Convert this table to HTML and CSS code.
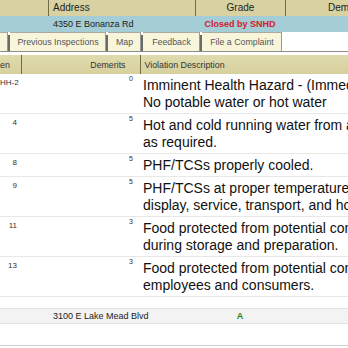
FILE: index.html
```html
<!DOCTYPE html>
<html>
<head>
<meta charset="utf-8">
<link rel="stylesheet" href="styles.css">
</head>
<body>
<div class="page">
  <div class="grid hdr">
    <div class="c c0"></div>
    <div class="c c1">Address</div>
    <div class="c c2">Grade</div>
    <div class="c c3">Demerits</div>
  </div>
  <div class="grid bar">
    <div class="c c0"></div>
    <div class="c c1">4350 E Bonanza Rd</div>
    <div class="c c2 closed">Closed by SNHD</div>
    <div class="c c3"></div>
  </div>
  <div class="detail">
    <div class="tabs">
      <div class="tab stub"></div>
      <div class="tab tab-prev">Previous Inspections</div>
      <div class="tab tab-map">Map</div>
      <div class="tab tab-feed">Feedback</div>
      <div class="tab tab-file">File a Complaint</div>
    </div>
    <table class="viol">
      <thead>
        <tr><th class="code">en</th><th class="dem">Demerits</th><th class="desc">Violation Description</th></tr>
      </thead>
      <tbody>
        <tr><td class="code">HH-2</td><td class="dem">0</td><td class="desc"><span class="ln">Imminent Health Hazard - (Immediate Closure)</span><span class="ln">No potable water or hot water</span></td></tr>
        <tr><td class="code">4</td><td class="dem">5</td><td class="desc"><span class="ln">Hot and cold running water from approved source</span><span class="ln">as required.</span></td></tr>
        <tr><td class="code">8</td><td class="dem">5</td><td class="desc"><span class="ln">PHF/TCSs properly cooled.</span></td></tr>
        <tr><td class="code">9</td><td class="dem">5</td><td class="desc"><span class="ln">PHF/TCSs at proper temperatures during storage,</span><span class="ln">display, service, transport, and holding.</span></td></tr>
        <tr><td class="code">11</td><td class="dem">3</td><td class="desc"><span class="ln">Food protected from potential contamination</span><span class="ln">during storage and preparation.</span></td></tr>
        <tr><td class="code">13</td><td class="dem">3</td><td class="desc"><span class="ln">Food protected from potential contamination by</span><span class="ln">employees and consumers.</span></td></tr>
      </tbody>
    </table>
  </div>
  <div class="grid foot">
    <div class="c c0"></div>
    <div class="c c1">3100 E Lake Mead Blvd</div>
    <div class="c c2 grade">A</div>
    <div class="c c3"></div>
  </div>
  <div class="after"></div>
</div>
</body>
</html>
```
FILE: styles.css
```css
* { box-sizing: border-box; }
html, body { margin: 0; padding: 0; background: #fff; }
body {
  width: 348px;
  height: 348px;
  overflow: hidden;
  font-family: "Liberation Sans", Arial, sans-serif;
  color: #111;
}
.page { width: 440px; }
.grid {
  display: grid;
  grid-template-columns: 48px 147px 90px 125px;
}
.c { white-space: nowrap; overflow: hidden; }
.hdr {
  height: 16px;
  background: #d8d2a2;
  font-size: 10px;
  line-height: 16px;
  color: #222;
}
.hdr .c + .c { border-left: 1px solid #726c45; }
.hdr .c1 { padding-left: 4px; }
.hdr .c2, .hdr .c3 { text-align: center; }
.bar {
  height: 16px;
  background: #a4cdd6;
  font-size: 9px;
  line-height: 16px;
  color: #1a1a1a;
}
.bar .c1 { padding-left: 5px; }
.closed { color: #d3202b; font-weight: bold; text-align: center; }

.tabs {
  display: flex;
  height: 20px;
  border-bottom: 1px solid #8d8d8d;
  margin-bottom: 3px;
}
.tab {
  position: relative;
  flex: none;
  height: 19px;
  background: #f8f5da;
  border-top: 1px solid #a9a9a0;
  border-right: 1px solid #9a9a94;
  border-left: 2px solid #6a6a66;
  padding: 0 1px 0 2px;
  font-size: 8.8px;
  line-height: 18px;
  color: #555;
  text-align: center;
  white-space: nowrap;
}
.tab::before {
  content: "";
  position: absolute;
  left: -2px;
  top: -1px;
  width: 2px;
  height: 3px;
  background: #fff;
}
.tab.stub {
  width: 8px;
  padding: 0;
  border-left: none;
}
.tab.stub::before { display: none; }
.tab-prev { width: 98px; }
.tab-map { width: 35px; }
.tab-feed { width: 59px; }
.tab-file { width: 82px; }

.viol {
  border-collapse: collapse;
  table-layout: fixed;
  width: 440px;
}
.viol th {
  height: 19px;
  padding: 0;
  font-weight: normal;
  font-size: 8.8px;
  line-height: 18px;
  color: #333;
  background: linear-gradient(#e0dbad, #d6d09d);
  white-space: nowrap;
  overflow: hidden;
}
.viol th + th { border-left: 1px solid #726c45; }
.viol .code { width: 21px; }
.viol .dem { width: 119px; text-align: right; }
.viol th.code { text-align: left; }
.viol th.dem { padding-right: 14px; }
.viol th.desc { text-align: left; padding-left: 4px; }
.viol td {
  vertical-align: top;
  border-bottom: 1px solid #e8e8e8;
  padding: 0;
}
.viol td.code {
  font-size: 8px;
  color: #333;
  text-align: right;
  padding: 4px 4px 0 0;
  white-space: nowrap;
  overflow: hidden;
}
.viol td.dem {
  font-size: 7px;
  color: #333;
  padding: 1px 7px 0 0;
}
.viol td.desc {
  font-size: 14px;
  line-height: 17px;
  padding: 3px 0 2px 3px;
  color: #111;
}
.ln { display: block; white-space: nowrap; }

.foot {
  margin-top: 11px;
  height: 16px;
  background: #f3f3f3;
  border-top: 1px solid #e2e2e2;
  border-bottom: 1px solid #e2e2e2;
  font-size: 9px;
  line-height: 14px;
  color: #222;
}
.foot .c1 { padding-left: 5px; }
.grade { color: #1f8a21; font-weight: bold; text-align: center; }
.after {
  height: 22px;
  border-bottom: 1px solid #cfcfcf;
}
```
